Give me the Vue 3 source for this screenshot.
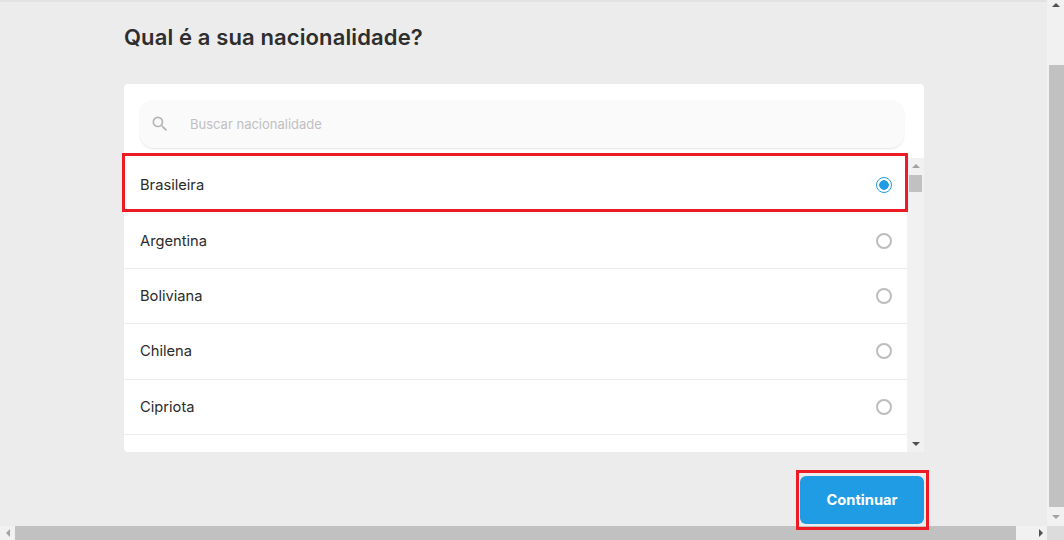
<script setup>
const nationalities = [
  { name: 'Brasileira', selected: true },
  { name: 'Argentina' },
  { name: 'Boliviana' },
  { name: 'Chilena' },
  { name: 'Cipriota' }
]
</script>

<template>
  <div class="page">
    <main class="content">
      <h1 class="title">Qual é a sua nacionalidade?</h1>

      <section class="card">
        <div class="search">
          <svg class="search-icon" viewBox="0 0 24 24" width="20" height="20">
            <path d="M15.5 14h-.79l-.28-.27A6.47 6.47 0 0 0 16 9.5 6.5 6.5 0 1 0 9.5 16c1.61 0 3.09-.59 4.23-1.57l.27.28v.79l5 4.99L20.49 19l-4.99-5zm-6 0C7.01 14 5 11.99 5 9.5S7.01 5 9.5 5 14 7.01 14 9.5 11.99 14 9.5 14z" fill="#b5b5b5" />
          </svg>
          <span class="search-text">Buscar nacionalidade</span>
        </div>

        <div class="list-wrap">
          <ul class="list">
            <li v-for="n in nationalities" :key="n.name" class="row">
              <span class="row-name">{{ n.name }}</span>
              <span class="radio" :class="{ 'radio-on': n.selected }"></span>
            </li>
          </ul>
          <div class="list-bar">
            <span class="arrow up list-up"></span>
            <span class="list-thumb"></span>
            <span class="arrow down list-down"></span>
          </div>
        </div>

        <span class="mark mark-row"></span>
      </section>

      <div class="actions">
        <button class="continue">
          Continuar
          <span class="mark mark-btn"></span>
        </button>
      </div>
    </main>

    <div class="vbar">
      <span class="vbar-top"><span class="arrow up"></span></span>
      <span class="vbar-thumb"></span>
      <span class="vbar-bottom"><span class="arrow down light"></span></span>
    </div>

    <div class="hbar">
      <span class="hbar-left"><span class="arrow left"></span></span>
      <span class="hbar-thumb"></span>
      <span class="hbar-right"><span class="arrow right"></span></span>
    </div>
    <div class="corner"></div>
  </div>
</template>

<style>
html, body {
  margin: 0;
  overflow: hidden;
}
</style>

<style scoped>
.page {
  width: 1064px;
  height: 540px;
  display: grid;
  grid-template-columns: 1047px 17px;
  grid-template-rows: 526px 14px;
  background: #ececec;
  font-family: Inter, "Liberation Sans", sans-serif;
  color: #2b2b2b;
  overflow: hidden;
}

.content {
  position: relative;
  z-index: 1;
  height: 526px;
  box-sizing: border-box;
  padding: 0 0 0 124px;
  border-top: 2px solid #e2e2e2;
  min-width: 0;
}

.title {
  margin: 20px 0 0;
  height: 30px;
  line-height: 30px;
  font-size: 22px;
  font-weight: 600;
  letter-spacing: 0.12px;
  color: #2e2e2e;
}

.card {
  position: relative;
  margin-top: 32px;
  width: 800px;
  height: 368px;
  background: #fff;
  border-radius: 4px;
  display: flex;
  flex-direction: column;
}

.search {
  margin: 16px 20px 0 16px;
  height: 48px;
  flex-shrink: 0;
  display: flex;
  align-items: center;
  background: #fafafa;
  border-radius: 14px;
  box-shadow: 0 1px 2px rgba(0, 0, 0, 0.1);
}
.search-icon {
  margin-left: 10px;
}
.search-text {
  margin-left: 20px;
  font-size: 13px;
  color: #c0c0c0;
}

.list-wrap {
  margin-top: 10px;
  flex: 1;
  min-height: 0;
  display: flex;
  overflow: hidden;
  border-radius: 0 0 4px 4px;
}
.list {
  list-style: none;
  margin: 0;
  padding: 0;
  width: 783px;
  overflow: hidden;
}
.row {
  box-sizing: border-box;
  height: 55.4px;
  display: flex;
  align-items: center;
  justify-content: space-between;
  padding: 0 15px 0 16px;
  border-bottom: 1px solid #ebebeb;
  font-size: 14.7px;
  color: #2b2b2b;
}
.row:first-child {
  border-bottom-color: transparent;
}

.radio {
  box-sizing: border-box;
  width: 16px;
  height: 16px;
  border: 2px solid #bdbdbd;
  border-radius: 50%;
  background: #fff;
}
.radio-on {
  border: 1.5px solid #1f9ce4;
  background: radial-gradient(circle, #1f9ce4 0 4.5px, #fff 5px);
}

.mark {
  position: absolute;
  box-sizing: border-box;
  border: 3px solid #ed1c24;
  pointer-events: none;
}
.mark-row {
  left: -2px;
  top: 69px;
  width: 786px;
  height: 59px;
}
.mark-btn {
  left: -4px;
  top: -6px;
  width: 133px;
  height: 60px;
}

.list-bar {
  position: relative;
  flex: 1;
  background: #f1f1f1;
}
.list-thumb {
  position: absolute;
  left: 2px;
  top: 17px;
  width: 13px;
  height: 17px;
  background: #c1c1c1;
}
.list-up {
  position: absolute;
  left: 5px;
  top: 6px;
}
.list-down {
  position: absolute;
  left: 5px;
  bottom: 6px;
}

.actions {
  margin-top: 24px;
  width: 800px;
  display: flex;
  justify-content: flex-end;
}
.continue {
  position: relative;
  width: 124px;
  height: 48px;
  border: none;
  border-radius: 6px;
  background: #1f9ce4;
  color: #fff;
  font-family: inherit;
  font-size: 14.7px;
  font-weight: 700;
}

.arrow {
  display: block;
  width: 0;
  height: 0;
  border: 4px solid transparent;
}
.arrow.up {
  border-top: none;
  border-bottom-color: #505050;
}
.arrow.list-up {
  border-bottom-color: #a3a3a3;
}
.arrow.down {
  border-bottom: none;
  border-top-color: #505050;
}
.arrow.light {
  border-top-color: #a3a3a3;
}
.arrow.left {
  border-left: none;
  border-right-color: #a3a3a3;
}
.arrow.right {
  border-right: none;
  border-left-color: #505050;
}

.vbar {
  display: flex;
  flex-direction: column;
  background: #f1f1f1;
}
.vbar-top,
.vbar-bottom {
  display: flex;
  justify-content: center;
}
.vbar-top {
  height: 65px;
  padding-top: 3px;
  box-sizing: border-box;
}
.vbar-thumb {
  flex: 1;
  margin-left: 2px;
  background: #c1c1c1;
}
.vbar-bottom {
  height: 19px;
  align-items: center;
}

.hbar {
  display: flex;
  background: #f1f1f1;
}
.hbar-left,
.hbar-right {
  display: flex;
  align-items: center;
}
.hbar-left {
  width: 15px;
  justify-content: center;
}
.hbar-thumb {
  width: 1001px;
  background: #c1c1c1;
}
.hbar-right {
  flex: 1;
  justify-content: flex-end;
  padding-right: 4px;
}
.corner {
  background: #dcdcdc;
}
</style>
